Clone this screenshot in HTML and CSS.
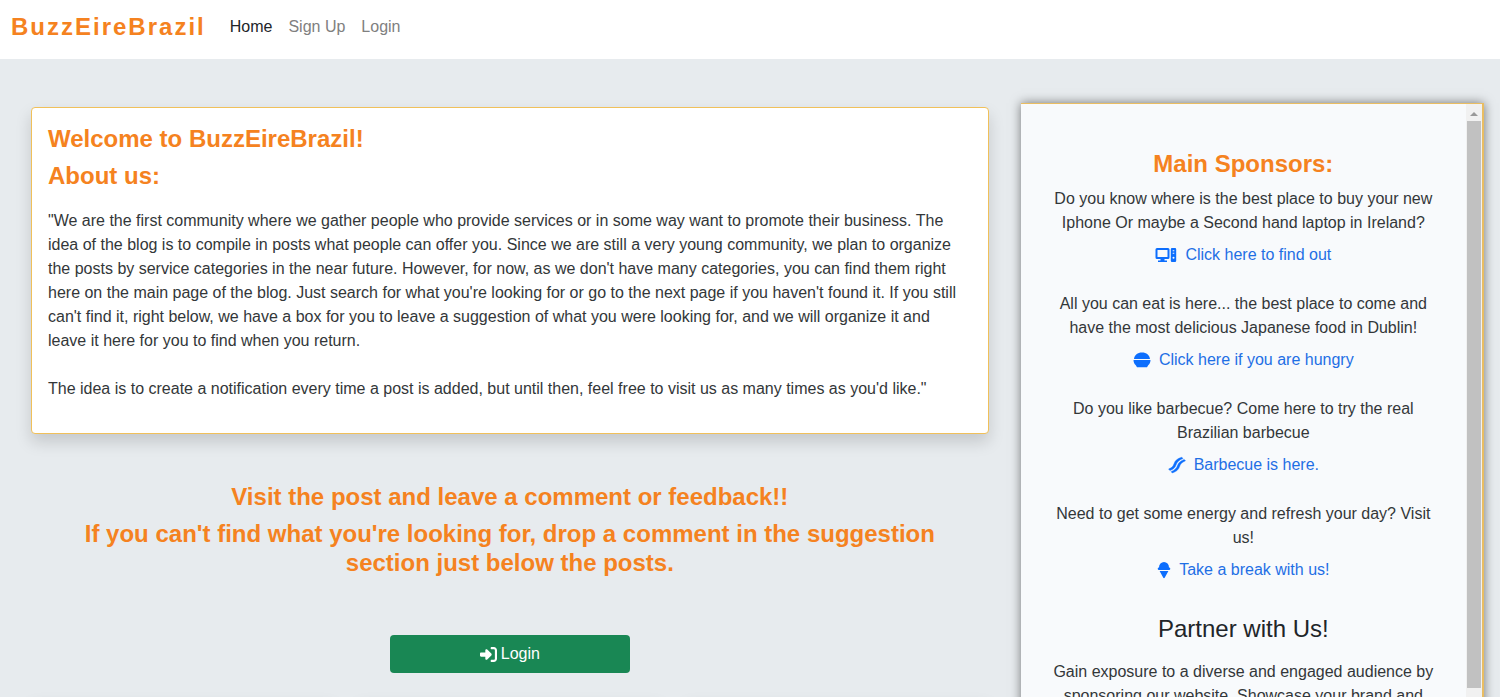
FILE: index.html
```html
<!DOCTYPE html>
<html lang="en">
<head>
<meta charset="utf-8">
<title>BuzzEireBrazil</title>
<link rel="stylesheet" href="styles.css">
</head>
<body>
<header class="navbar">
  <a class="brand" href="#">BuzzEireBrazil</a>
  <nav class="nav">
    <a class="nav-link active" href="#">Home</a>
    <a class="nav-link" href="#">Sign Up</a>
    <a class="nav-link" href="#">Login</a>
  </nav>
</header>
<div class="layout">
  <main class="main">
    <section class="about">
      <h2 class="title">Welcome to BuzzEireBrazil!</h2>
      <h2 class="title">About us:</h2>
      <p class="about-text">"We are the first community where we gather people who provide services or in some way want to promote their business. The idea of the blog is to compile in posts what people can offer you. Since we are still a very young community, we plan to organize the posts by service categories in the near future. However, for now, as we don't have many categories, you can find them right here on the main page of the blog. Just search for what you're looking for or go to the next page if you haven't found it. If you still can't find it, right below, we have a box for you to leave a suggestion of what you were looking for, and we will organize it and leave it here for you to find when you return.<br><br>The idea is to create a notification every time a post is added, but until then, feel free to visit us as many times as you'd like."</p>
    </section>
    <section class="invite">
      <h2 class="title">Visit the post and leave a comment or feedback!!</h2>
      <h2 class="title">If you can't find what you're looking for, drop a comment in the suggestion section just below the posts.</h2>
    </section>
    <button class="login" type="button">
      <svg class="login-icon" viewBox="0 0 512 512" aria-hidden="true"><path d="M217.900 105.900L340.700 228.700c7.200 7.200 11.300 17.100 11.300 27.300s-4.100 20.100-11.300 27.300L217.900 406.100c-6.400 6.400-15 9.900-24 9.900c-18.700 0-33.900-15.200-33.900-33.900l0-62.100L32 320c-17.700 0-32-14.300-32-32l0-64c0-17.700 14.300-32 32-32l128 0 0-62.100c0-18.700 15.200-33.900 33.900-33.900c9 0 17.600 3.600 24 9.900zM352 416l64 0c17.700 0 32-14.300 32-32l0-256c0-17.700-14.300-32-32-32l-64 0c-17.700 0-32-14.300-32-32s14.300-32 32-32l64 0c53 0 96 43 96 96l0 256c0 53-43 96-96 96l-64 0c-17.700 0-32-14.300-32-32s14.300-32 32-32z"/></svg>
      Login
    </button>
    <div class="posts">
      <article class="post"></article>
      <article class="post"></article>
      <article class="post"></article>
    </div>
  </main>
  <aside class="sidebar">
    <div class="sponsors">
      <h2 class="title sponsors-title">Main Sponsors:</h2>
      <p class="pitch">Do you know where is the best place to buy your new Iphone Or maybe a Second hand laptop in Ireland?</p>
      <a class="sponsor-link" href="#">
        <svg class="icon-wide" viewBox="0 0 22 18" aria-hidden="true"><path fill-rule="evenodd" d="M2 2h11a1.500 1.500 0 0 1 1.500 1.500v8A1.500 1.500 0 0 1 13 13H9.500v1.500H12V16H3v-1.500h2.500V13H2A1.500 1.500 0 0 1 .5 11.500v-8A1.500 1.500 0 0 1 2 2zm.5 2v7h10V4zM17 2h3a1.200 1.200 0 0 1 1.200 1.200v11.600A1.200 1.200 0 0 1 20 16h-3a1.200 1.200 0 0 1-1.200-1.200V3.200A1.200 1.200 0 0 1 17 2zm.7 2.200v1h1.600v-1zm0 2.600v1h1.600v-1zm.8 4a1 1 0 1 0 0 2 1 1 0 0 0 0-2z"/></svg>
        Click here to find out
      </a>
      <p class="pitch">All you can eat is here... the best place to come and have the most delicious Japanese food in Dublin!</p>
      <a class="sponsor-link" href="#">
        <svg class="icon" viewBox="0 0 18 18" aria-hidden="true"><path d="M1 8C1.500 4 4.500 1.500 9 1.500S16.500 4 17 8zM.5 9h17c0 2.200-.8 4-2.300 5.200L14 16.200H4l-1.200-2C1.300 13 .5 11.200.5 9z"/></svg>
        Click here if you are hungry
      </a>
      <p class="pitch">Do you like barbecue? Come here to try the real Brazilian barbecue</p>
      <a class="sponsor-link" href="#">
        <svg class="icon bacon" viewBox="0 0 18 18" aria-hidden="true"><path d="M.6 13C3.500 12 5.200 10.600 6 7.800 7 4.300 9.500 2.500 13.800 1.200l1.200 1.200C11 4 9 5.800 8 9c-.8 2.600-2.500 4.400-6.100 5.500zM3.100 15.700C6.800 14 8.600 12.300 9.500 9.500c1-3 3-4.600 6.700-6.100l1.300 1.400c-3.700 1.700-5.100 3.200-6 6-1 3-3.200 4.900-7.200 6.200z"/></svg>
        Barbecue is here.
      </a>
      <p class="pitch">Need to get some energy and refresh your day? Visit us!</p>
      <a class="sponsor-link" href="#">
        <svg class="icon-slim" viewBox="0 0 14 18" aria-hidden="true"><path d="M2 6.500a5 5.500 0 0 1 10 0 1.300 1.300 0 0 1 0 2.600H2A1.300 1.300 0 0 1 2 6.500zM2.600 10h8.800L7.700 16.800a.8.8 0 0 1-1.400 0z"/></svg>
        Take a break with us!
      </a>
      <h2 class="partner">Partner with Us!</h2>
      <p class="pitch">Gain exposure to a diverse and engaged audience by sponsoring our website. Showcase your brand and</p>
    </div>
    <div class="scrollbar" aria-hidden="true">
      <svg class="scroll-arrow" viewBox="0 0 16 17"><path d="M4 12l4-4 4 4z"/></svg>
      <div class="thumb"></div>
    </div>
  </aside>
</div>
</body>
</html>
```
FILE: styles.css
```css
* { box-sizing: border-box; }

body {
  margin: 0;
  height: 100vh;
  overflow: hidden;
  background: #e7ebee;
  color: #333739;
  font: 16px/24px "Liberation Sans", Arial, sans-serif;
}

h2, p { margin: 0; }
a { text-decoration: none; }

.navbar {
  display: flex;
  align-items: center;
  gap: 24px;
  padding: 9px 11px 14px;
  background: #fff;
}
.brand {
  color: #f58220;
  font-size: 24px;
  line-height: 36px;
  font-weight: bold;
  letter-spacing: 2px;
}
.nav { display: flex; gap: 16px; }
.nav-link { color: #808080; }
.nav-link.active { color: #212529; }

.layout {
  display: flex;
  align-items: flex-start;
  gap: 32px;
  padding: 44px 16px 0 31px;
}
.main {
  flex: 959 1 0;
  display: flex;
  flex-direction: column;
  padding-top: 4px;
}

.about {
  padding: 16px 16px 32px;
  background: #fff;
  border: 1px solid #f0c05a;
  border-radius: 4px;
  box-shadow: 0 8px 16px rgba(0, 0, 0, .15);
}
.title {
  color: #f58220;
  font-size: 24px;
  line-height: 29px;
  font-weight: bold;
  margin-bottom: 8px;
}
.about-text { padding-top: 11px; }

.invite {
  margin-top: 48px;
  padding: 0 32px;
  text-align: center;
}

.login {
  display: flex;
  align-items: center;
  justify-content: center;
  gap: 4px;
  align-self: center;
  width: 25%;
  margin-top: 50px;
  padding: 7px 12px;
  border: 0;
  border-radius: 4px;
  background: #198754;
  color: #fff;
  font: inherit;
}
.login-icon { width: 17px; height: 17px; fill: currentColor; }

.posts {
  display: grid;
  grid-template-columns: repeat(3, 1fr);
  gap: 24px;
  margin-top: 26px;
}
.post {
  height: 300px;
  background: #fff;
  border-radius: 4px;
  box-shadow: 0 8px 16px rgba(0, 0, 0, .15);
}

.sidebar {
  flex: 462 1 0;
  display: flex;
  height: 100vh;
  background: #f8fafc;
  border: 1px solid #e9bd62;
  border-left: 0;
  border-right-width: 2px;
  box-shadow: 0 0 10px rgba(0, 0, 0, .5);
}
.sponsors {
  flex: 1;
  padding: 45px 24px 0;
  text-align: center;
}
.sponsors-title { margin-bottom: 9px; }
.sponsor-link {
  display: flex;
  align-items: center;
  justify-content: center;
  gap: 8px;
  margin: 8px 0 25px;
  color: #1f6fe5;
}
.sponsor-link svg { height: 18px; fill: #0d6efd; }
.icon { width: 18px; }
.icon-wide { width: 22px; }
.icon-slim { width: 14px; }
.bacon { stroke: #0d6efd; stroke-width: .4; }
.partner {
  margin: 32px 0 16px;
  color: #212529;
  font-size: 24px;
  line-height: 30px;
  font-weight: normal;
}

.scrollbar {
  display: flex;
  flex-direction: column;
  width: 16px;
  background: #f1f1f1;
}
.scroll-arrow { height: 17px; fill: #999; }
.thumb {
  height: 567px;
  margin: 0 1px;
  background: #c1c1c1;
}
```
